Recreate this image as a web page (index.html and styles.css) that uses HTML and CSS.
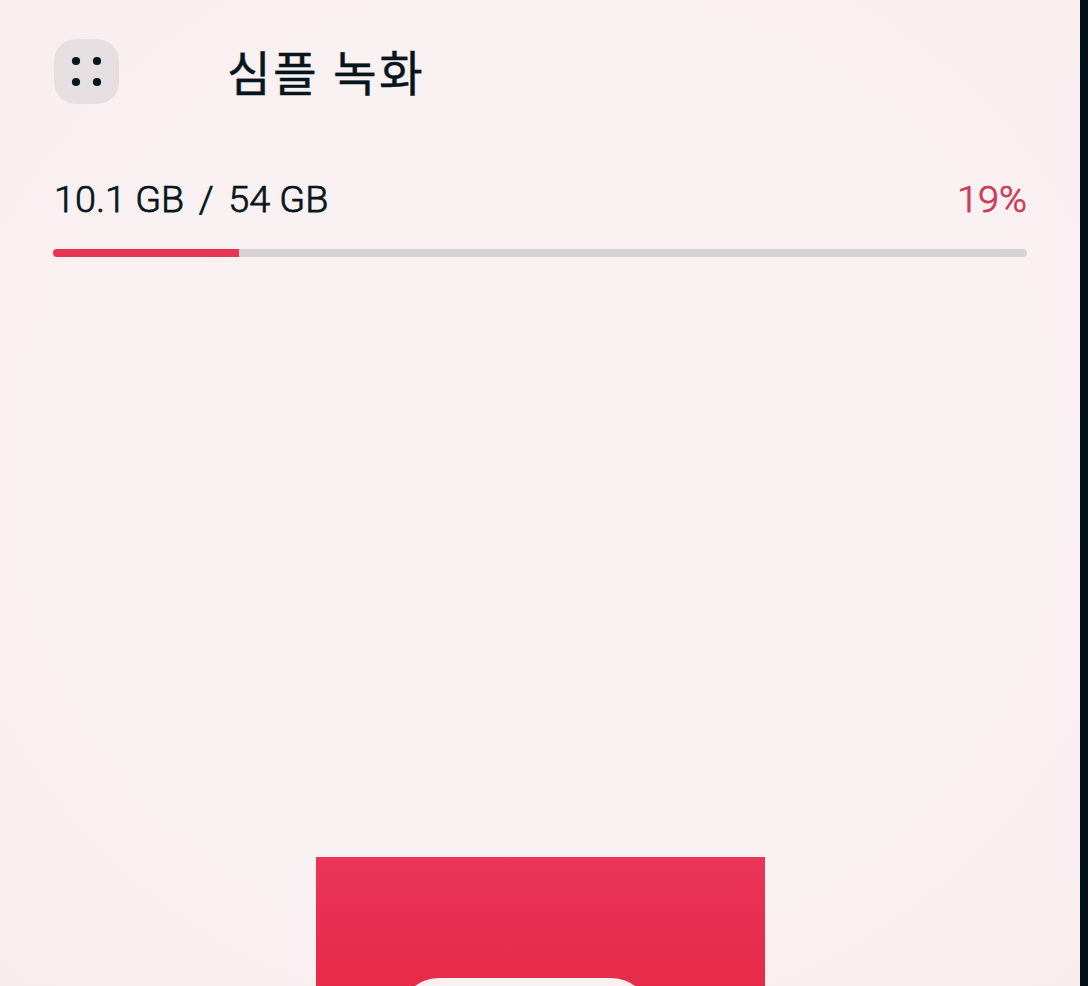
FILE: index.html
```
<!DOCTYPE html>
<html lang="ko">
<head>
  <meta charset="UTF-8" />
  <meta name="viewport" content="width=device-width, initial-scale=1.0"/>
  <title>심플 녹화</title>
  <link rel="stylesheet" href="styles.css">
</head>
<body>
  <main class="screen">
    <header class="header">
      <button class="menu-btn" aria-label="메뉴">
        <svg viewBox="0 0 65 65" fill="currentColor">
          <circle cx="22" cy="22" r="4.1"/>
          <circle cx="43" cy="22" r="4.1"/>
          <circle cx="22" cy="43" r="4.1"/>
          <circle cx="43" cy="43" r="4.1"/>
        </svg>
      </button>
      <h1>심플 녹화</h1>
    </header>

    <section class="storage">
      <div class="storage-info">
        <p class="storage-size"><span>10.1 GB</span><span>/</span><span>54 GB</span></p>
        <p class="storage-percent">19%</p>
      </div>
      <div class="storage-bar">
        <div class="storage-used" style="width: 19.1%"></div>
      </div>
    </section>

    <div class="record">
      <div class="record-icon"></div>
    </div>
  </main>
</body>
</html>
```

FILE: styles.css
```
* {
  box-sizing: border-box;
  margin: 0;
  padding: 0;
}

html, body {
  height: 100vh;
  overflow: hidden;
  background: #020f16;
  color: #07151c;
  font-family: Roboto, 'Noto Sans CJK KR', sans-serif;
}

.screen {
  display: flex;
  flex-direction: column;
  width: 1080px;
  height: 100vh;
  padding: 39px 53px 0;
  overflow: hidden;
  background: radial-gradient(ellipse 800px 740px at 50% 48%, #faf1f2 65%, #f8ebec 100%);
}

.header {
  display: flex;
  align-items: center;
  height: 65px;
  padding-left: 1px;
}

.menu-btn {
  width: 65px;
  height: 65px;
  border: none;
  border-radius: 22px;
  background: #e6dfe1;
  color: #07151c;
}

.menu-btn svg {
  display: block;
  width: 65px;
  height: 65px;
}

.header h1 {
  margin-left: 108px;
  font-family: 'Noto Sans CJK KR', sans-serif;
  font-size: 47.5px;
  font-weight: 400;
  line-height: 63px;
  padding-bottom: 2px;
  letter-spacing: 2.4px;
  word-spacing: -2px;
  -webkit-text-stroke: 0.4px #07151c;
}

.storage {
  margin-top: 70px;
}

.storage-info {
  display: flex;
  justify-content: space-between;
  height: 75px;
  font-size: 37.8px;
  font-weight: 300;
  line-height: 50px;
  -webkit-text-stroke: 0.75px currentColor;
}

.storage-size {
  display: flex;
  gap: 14.5px;
  padding-left: 1px;
}

.storage-percent {
  color: #cb3b57;
}

.storage-bar {
  height: 8px;
  border-radius: 4px;
  overflow: hidden;
  background: #d6d3d6;
}

.storage-used {
  height: 100%;
  background: #e93454;
}

.record {
  flex-shrink: 0;
  width: 449px;
  height: 449px;
  margin: 600px auto 0;
  padding-top: 121px;
  background: linear-gradient(#eb3457, #e82e50 75px, #e62b48 129px);
}

.record-icon {
  width: 252px;
  height: 200px;
  margin-left: 83px;
  border-radius: 40px;
  background: #faf0f1;
}
```
